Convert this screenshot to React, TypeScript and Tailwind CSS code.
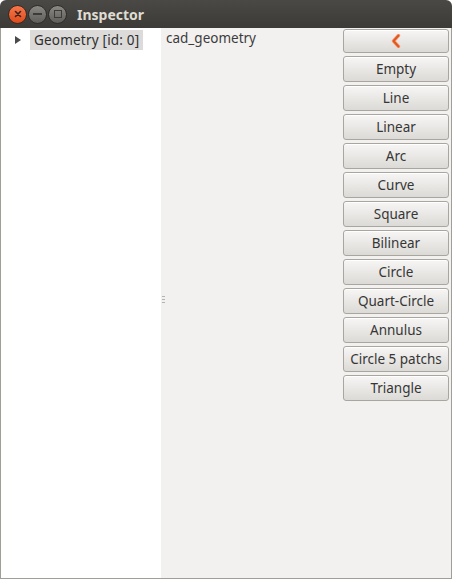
import React from 'react'

const buttons = [
  'Empty',
  'Line',
  'Linear',
  'Arc',
  'Curve',
  'Square',
  'Bilinear',
  'Circle',
  'Quart-Circle',
  'Annulus',
  'Circle 5 patchs',
  'Triangle',
]

function ToolButton({ children, short }: { children: React.ReactNode; short?: boolean }) {
  return (
    <div
      className={
        (short ? 'h-[24px] ' : 'h-[26px] ') +
        'flex items-center justify-center rounded-[3px] border border-[#a9a69f] bg-gradient-to-b from-[#f7f6f5] to-[#dcdad6] text-[13.5px] text-[#363636] shadow-[inset_0_1px_0_#ffffff]'
      }
    >
      {children}
    </div>
  )
}

export default function App() {
  return (
    <div
      className="w-[452px] h-[579px] flex flex-col overflow-hidden"
      style={{ fontFamily: '"Noto Sans", "DejaVu Sans", sans-serif' }}
    >
      {/* Title bar */}
      <div className="h-[28px] shrink-0 flex items-center rounded-t-[6px] bg-gradient-to-b from-[#4a4945] to-[#3c3b37] pl-[8px]">
        <div className="flex items-center gap-[1px]">
          <div className="w-[19px] h-[19px] rounded-full bg-gradient-to-b from-[#f5774a] to-[#de4a1a] border border-[#3a2a22] flex items-center justify-center">
            <svg width="8" height="8" viewBox="0 0 8 8">
              <path d="M1.5 1.5 L6.5 6.5 M6.5 1.5 L1.5 6.5" stroke="#3b2016" strokeWidth="1.6" strokeLinecap="round" />
            </svg>
          </div>
          <div className="w-[19px] h-[19px] rounded-full bg-gradient-to-b from-[#8a8984] to-[#5e5d59] border border-[#2e2d2a] flex items-center justify-center">
            <div className="w-[9px] h-[2px] bg-[#3c3b37]" />
          </div>
          <div className="w-[19px] h-[19px] rounded-full bg-gradient-to-b from-[#8a8984] to-[#5e5d59] border border-[#2e2d2a] flex items-center justify-center">
            <div className="w-[8px] h-[8px] border-[1.5px] border-[#3c3b37]" />
          </div>
        </div>
        <span className="ml-[10px] text-[14px] font-bold text-[#dfdbd2]">Inspector</span>
      </div>

      {/* Body */}
      <div className="flex-1 flex border-x border-b border-[#a09e98]">
        {/* Tree pane */}
        <div className="w-[160px] bg-white pt-[2px]">
          <div className="flex items-center h-[20px]">
            <svg width="29" height="20" viewBox="0 0 29 20">
              <path d="M14 6 L20 10 L14 14 Z" fill="#4a4a4a" />
            </svg>
            <span className="px-[4px] h-[20px] flex items-center bg-[#dcdbd9] text-[13.5px] text-[#2e2e2e] tracking-[0.2px]">
              Geometry [id: 0]
            </span>
          </div>
        </div>

        {/* Right pane */}
        <div className="flex-1 relative bg-[#f2f1f0] flex">
          <div className="absolute left-[1px] top-[268px] flex flex-col gap-[2px]">
            <div className="w-[3px] h-[1px] bg-[#b5b3ae]" />
            <div className="w-[3px] h-[1px] bg-[#b5b3ae]" />
            <div className="w-[3px] h-[1px] bg-[#b5b3ae]" />
          </div>
          <div className="flex-1 pl-[5px] pt-[0px] text-[13.5px] text-[#3c3c3c]">cad_geometry</div>
          <div className="w-[106px] mr-[2px] pt-[1px] flex flex-col gap-[3px]">
            <ToolButton short>
              <svg width="12" height="14" viewBox="0 0 12 14">
                <path d="M8.5 1.5 L3.5 7 L8.5 12.5" fill="none" stroke="#f4a27c" strokeWidth="3.4" strokeLinecap="round" strokeLinejoin="round" />
                <path d="M8.5 1.5 L3.5 7 L8.5 12.5" fill="none" stroke="#e2571f" strokeWidth="2" strokeLinecap="round" strokeLinejoin="round" />
              </svg>
            </ToolButton>
            {buttons.map((b) => (
              <ToolButton key={b}>{b}</ToolButton>
            ))}
          </div>
        </div>
      </div>
    </div>
  )
}
